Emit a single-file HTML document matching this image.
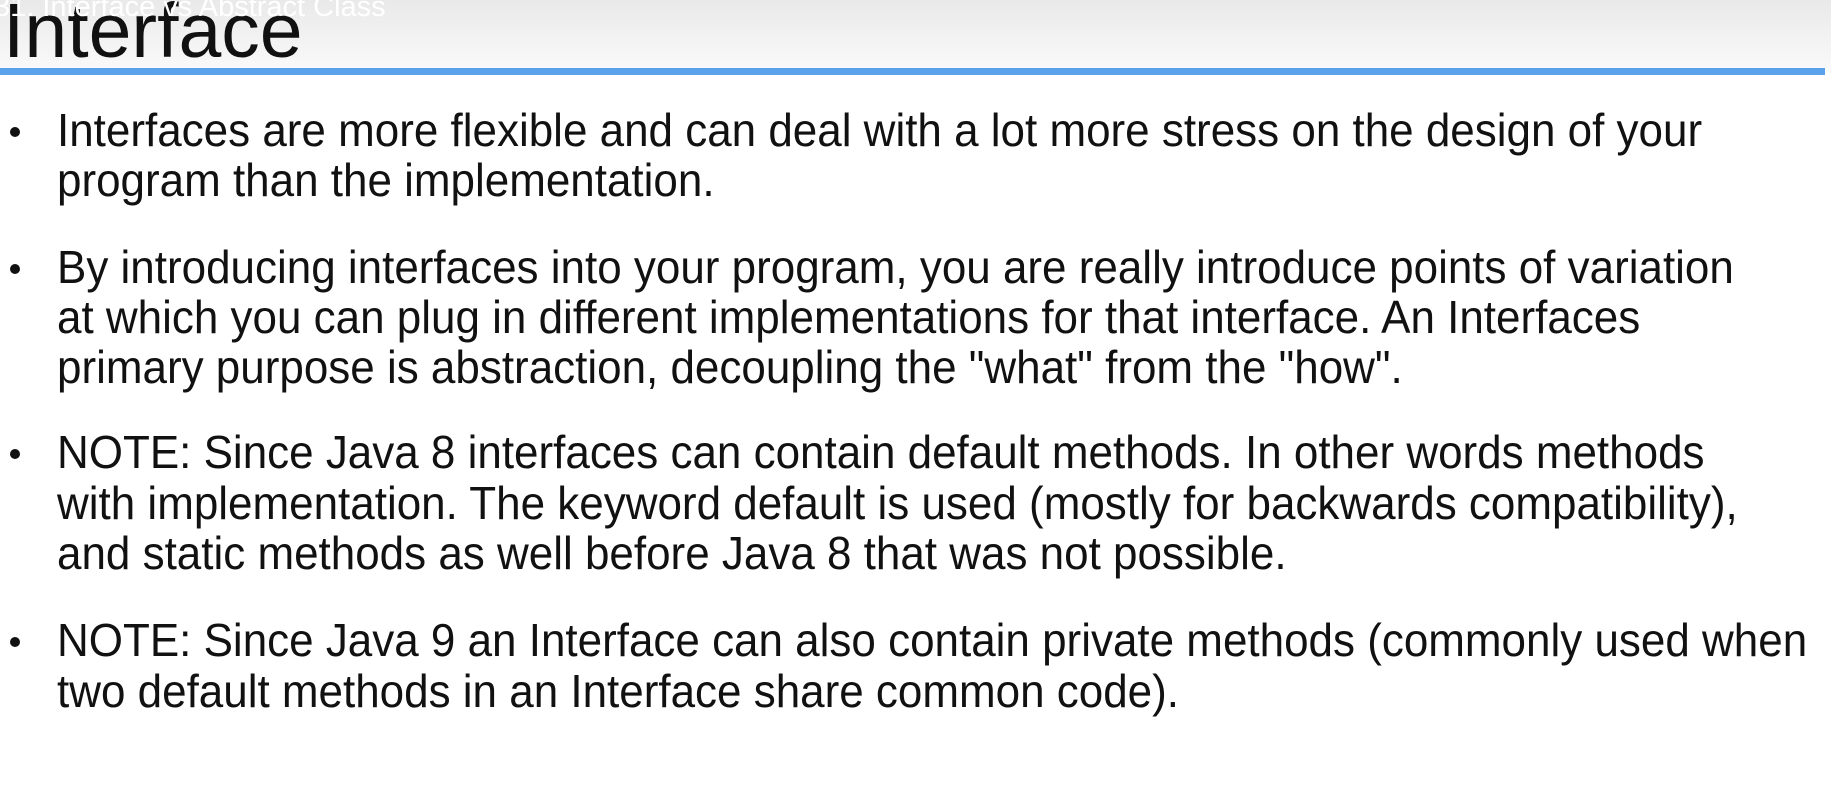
<!DOCTYPE html>
<html><head><meta charset="utf-8"><style>
html,body{margin:0;padding:0;width:1831px;height:796px;overflow:hidden;background:#fff;font-family:"Liberation Sans",sans-serif;}
.hdr{position:absolute;left:0;top:0;width:1831px;height:72px;background:linear-gradient(#e9e9e9,#fafafa);}
.blue{position:absolute;left:0;top:68px;width:1825px;height:7px;background:#5aa3ec;}
.small{position:absolute;left:-6px;top:-9px;font-size:29px;color:#fff;white-space:nowrap;}
.title{position:absolute;left:3px;top:-13px;font-size:77px;color:#111;white-space:nowrap;}
.line{position:absolute;left:57px;font-size:46px;color:#111;white-space:nowrap;transform:scaleX(0.956);transform-origin:0 0;line-height:1;}
.dot{position:absolute;left:10px;width:10px;height:10px;border-radius:50%;background:#111;}
</style></head><body>
<div class="hdr"></div>
<div class="title">Interface</div>
<div class="small">31. Interface vs Abstract Class</div>
<div class="blue"></div>

<div class="dot" style="top:127px"></div>
<div class="line" style="top:107px">Interfaces are more flexible and can deal with a lot more stress on the design of your</div>
<div class="line" style="top:157px">program than the implementation.</div>

<div class="dot" style="top:264px"></div>
<div class="line" style="top:244px">By introducing interfaces into your program, you are really introduce points of variation</div>
<div class="line" style="top:294px">at which you can plug in different implementations for that interface. An Interfaces</div>
<div class="line" style="top:344px">primary purpose is abstraction, decoupling the "what" from the "how".</div>

<div class="dot" style="top:449px"></div>
<div class="line" style="top:429px">NOTE: Since Java 8 interfaces can contain default methods. In other words methods</div>
<div class="line" style="top:480px">with implementation. The keyword default is used (mostly for backwards compatibility),</div>
<div class="line" style="top:530px">and static methods as well before Java 8 that was not possible.</div>

<div class="dot" style="top:637px"></div>
<div class="line" style="top:617px">NOTE: Since Java 9 an Interface can also contain private methods (commonly used when</div>
<div class="line" style="top:668px">two default methods in an Interface share common code).</div>
</body></html>
